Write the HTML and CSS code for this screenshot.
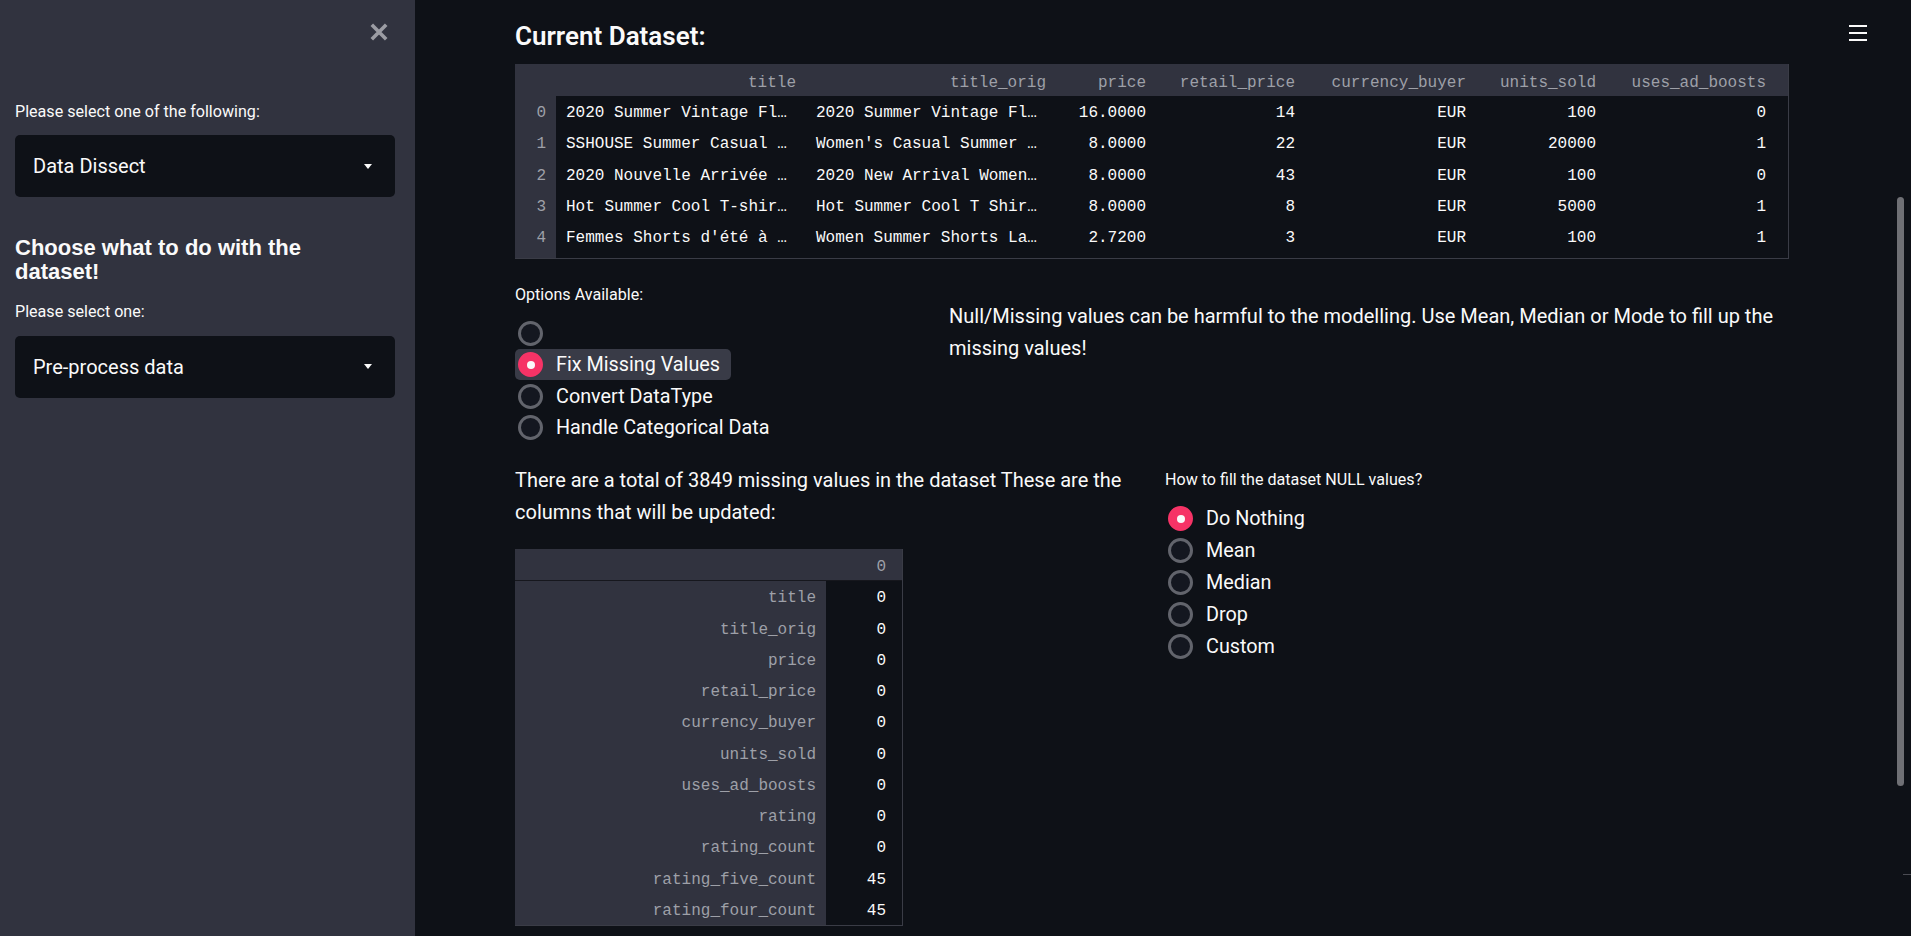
FILE: index.html
```html
<!DOCTYPE html>
<html lang="en">
<head>
<meta charset="utf-8">
<title>Data Dissect</title>
<link rel="stylesheet" href="styles.css">
</head>
<body>
<div class="app">
  <aside class="sidebar">
    <button class="close-btn" aria-label="Close sidebar">
      <svg viewBox="0 0 18 18" width="18" height="18"><path d="M1.8 1.8 L16.2 16.2 M16.2 1.8 L1.8 16.2" stroke="currentColor" stroke-width="3.6" fill="none"/></svg>
    </button>
    <div class="sb-content">
      <div class="wlabel sb-label1">Please select one of the following:</div>
      <div class="select"><span>Data Dissect</span><i class="caret"></i></div>
      <h3 class="sb-heading">Choose what to do with the<br>dataset!</h3>
      <div class="wlabel sb-label2">Please select one:</div>
      <div class="select"><span>Pre-process data</span><i class="caret"></i></div>
    </div>
  </aside>

  <main class="main">
    <div class="hamburger" aria-label="menu"><span></span><span></span><span></span></div>
    <div class="content">
      <h3 class="title">Current Dataset:</h3>

      <div class="df-wrap df-main">
        <table class="df">
          <colgroup>
            <col class="w-idx"><col class="w-title"><col class="w-title"><col class="w-price"><col class="w-retail"><col class="w-cur"><col class="w-units"><col class="w-ads"><col class="w-fill1">
          </colgroup>
          <thead>
            <tr><th></th><th>title</th><th>title_orig</th><th>price</th><th>retail_price</th><th>currency_buyer</th><th>units_sold</th><th>uses_ad_boosts</th><th></th></tr>
          </thead>
          <tbody>
            <tr><th>0</th><td class="l">2020 Summer Vintage Fl…</td><td class="l">2020 Summer Vintage Fl…</td><td>16.0000</td><td>14</td><td>EUR</td><td>100</td><td>0</td><td></td></tr>
            <tr><th>1</th><td class="l">SSHOUSE Summer Casual …</td><td class="l">Women's Casual Summer …</td><td>8.0000</td><td>22</td><td>EUR</td><td>20000</td><td>1</td><td></td></tr>
            <tr><th>2</th><td class="l">2020 Nouvelle Arrivée …</td><td class="l">2020 New Arrival Women…</td><td>8.0000</td><td>43</td><td>EUR</td><td>100</td><td>0</td><td></td></tr>
            <tr><th>3</th><td class="l">Hot Summer Cool T-shir…</td><td class="l">Hot Summer Cool T Shir…</td><td>8.0000</td><td>8</td><td>EUR</td><td>5000</td><td>1</td><td></td></tr>
            <tr><th>4</th><td class="l">Femmes Shorts d'été à …</td><td class="l">Women Summer Shorts La…</td><td>2.7200</td><td>3</td><td>EUR</td><td>100</td><td>1</td><td></td></tr>
            <tr class="spacer"><th></th><td></td><td></td><td></td><td></td><td></td><td></td><td></td><td></td></tr>
          </tbody>
        </table>
      </div>

      <div class="row row-options">
        <div class="col">
          <div class="wlabel opt-label">Options Available:</div>
          <div class="radios radios-left">
            <div class="radio"><span class="circle"></span><span class="rtext"></span></div>
            <div class="radio checked focused"><span class="circle"></span><span class="rtext">Fix Missing Values</span></div>
            <div class="radio"><span class="circle"></span><span class="rtext">Convert DataType</span></div>
            <div class="radio"><span class="circle"></span><span class="rtext">Handle Categorical Data</span></div>
          </div>
        </div>
        <div class="col col-note">
          <p class="text">Null/Missing values can be harmful to the modelling. Use Mean, Median or Mode to fill up the missing values!</p>
        </div>
      </div>

      <div class="row row-missing">
        <div class="col">
          <p class="text">There are a total of 3849 missing values in the dataset These are the columns that will be updated:</p>
          <div class="df-wrap df-small">
            <table class="df">
              <colgroup><col class="w-name"><col class="w-val"><col class="w-fill2"></colgroup>
              <thead><tr><th></th><th>0</th><th></th></tr></thead>
              <tbody>
                <tr><th>title</th><td>0</td><td></td></tr>
                <tr><th>title_orig</th><td>0</td><td></td></tr>
                <tr><th>price</th><td>0</td><td></td></tr>
                <tr><th>retail_price</th><td>0</td><td></td></tr>
                <tr><th>currency_buyer</th><td>0</td><td></td></tr>
                <tr><th>units_sold</th><td>0</td><td></td></tr>
                <tr><th>uses_ad_boosts</th><td>0</td><td></td></tr>
                <tr><th>rating</th><td>0</td><td></td></tr>
                <tr><th>rating_count</th><td>0</td><td></td></tr>
                <tr><th>rating_five_count</th><td>45</td><td></td></tr>
                <tr><th>rating_four_count</th><td>45</td><td></td></tr>
              </tbody>
            </table>
          </div>
        </div>
        <div class="col col-fill">
          <div class="wlabel fill-label">How to fill the dataset NULL values?</div>
          <div class="radios radios-right">
            <div class="radio checked"><span class="circle"></span><span class="rtext">Do Nothing</span></div>
            <div class="radio"><span class="circle"></span><span class="rtext">Mean</span></div>
            <div class="radio"><span class="circle"></span><span class="rtext">Median</span></div>
            <div class="radio"><span class="circle"></span><span class="rtext">Drop</span></div>
            <div class="radio"><span class="circle"></span><span class="rtext">Custom</span></div>
          </div>
        </div>
      </div>
    </div>
    <div class="scrollbar"></div>
    <div class="corner-line"></div>
  </main>
</div>
</body>
</html>
```

FILE: styles.css
```css
* { box-sizing: border-box; }

html, body {
  margin: 0;
  padding: 0;
}

body {
  background: #0e1117;
  color: #fafafa;
  font-family: Roboto, "Liberation Sans", sans-serif;
  overflow: hidden;
}

.app {
  display: flex;
  height: 936px;
}

/* ---------- Sidebar ---------- */
.sidebar {
  position: relative;
  flex: none;
  width: 415px;
  height: 100%;
  background: #31333f;
  padding: 101px 20px 0 15px;
}

.close-btn {
  position: absolute;
  left: 370px;
  top: 23px;
  width: 18px;
  height: 18px;
  padding: 0;
  border: 0;
  background: none;
  color: #9b9ca3;
  display: flex;
}

.sb-content {
  display: flex;
  flex-direction: column;
}

.wlabel {
  font-size: 16.1px;
  line-height: 22px;
  color: #fafafa;
}

.sb-label1 { margin-bottom: 12px; }

.select {
  height: 62px;
  background: #0e1117;
  border-radius: 5px;
  display: flex;
  align-items: center;
  justify-content: space-between;
  padding: 0 23px 0 18px;
  font-size: 20px;
}

.caret {
  width: 0;
  height: 0;
  border-left: 4.5px solid transparent;
  border-right: 4.5px solid transparent;
  border-top: 5px solid #fafafa;
}

.sb-heading {
  margin: 38.7px 0 0 0;
  font-family: "Liberation Sans", Roboto, sans-serif;
  font-size: 22px;
  font-weight: 700;
  line-height: 24.6px;
}

.sb-label2 { margin: 16.6px 0 12.5px 0; }

/* ---------- Main ---------- */
.main {
  position: relative;
  flex: 1;
  height: 100%;
}

.hamburger {
  position: absolute;
  top: 25px;
  right: 44px;
  width: 18px;
  display: flex;
  flex-direction: column;
  gap: 5px;
}

.hamburger span {
  display: block;
  height: 2px;
  background: #fafafa;
}

.content {
  width: 1274px;
  margin-left: 100px;
}

.title {
  margin: 0 0 13px 0;
  padding-top: 22px;
  font-size: 26px;
  line-height: 29px;
  font-weight: 600;
}

/* ---------- Dataframes ---------- */
.df-wrap {
  border-right: 1px solid #3a3c46;
  border-bottom: 1px solid #3a3c46;
}

.df {
  width: 100%;
  border-collapse: separate;
  border-spacing: 0;
  table-layout: fixed;
  font-family: "Liberation Mono", "DejaVu Sans Mono", monospace;
  font-size: 16px;
}

.df th, .df td {
  padding: 3px 10px 0 10px;
  text-align: right;
  white-space: pre;
  overflow: hidden;
}

.df thead th {
  height: 32px;
  padding-top: 5px;
  background: #31333f;
  color: #9ea0a8;
  font-weight: 400;
}

.df tbody th {
  background: #31333f;
  color: #9ea0a8;
  font-weight: 400;
}

.df tbody td {
  height: 31.25px;
  color: #fafafa;
  background: #0e1117;
}

.df td.l { text-align: left; }

.df tr.spacer th, .df tr.spacer td { height: 6px; padding: 0; }

.w-idx { width: 41px; }
.w-title { width: 250px; }
.w-price { width: 100px; }
.w-retail { width: 149px; }
.w-cur { width: 171px; }
.w-units { width: 130px; }
.w-ads { width: 170px; }
.w-fill1 { width: 12px; }

.df-small { width: 388px; margin-top: 21px; }
.df-small thead th { height: 32px; border-bottom: 1px solid #16171d; }
.df-small tbody th, .df-small tbody td { padding-top: 4px; }
.w-name { width: 311px; }
.w-val { width: 70px; }
.w-fill2 { width: 6px; }

/* ---------- Rows / columns ---------- */
.row {
  display: grid;
}

.row-options {
  grid-template-columns: 414px 1fr;
  column-gap: 20px;
  margin-top: 25px;
}

.row-missing {
  grid-template-columns: 624px 1fr;
  column-gap: 26px;
  margin-top: 20.5px;
}

.text {
  margin: 0;
  font-size: 20px;
  line-height: 32px;
}

.col-note { padding-top: 15.6px; }

.opt-label { margin-bottom: 11px; }

.col-fill { padding-top: 4.8px; }
.fill-label { margin-bottom: 12px; }

/* ---------- Radios ---------- */
.radios {
  display: flex;
  flex-direction: column;
  align-items: flex-start;
}

.radio {
  display: flex;
  align-items: center;
  height: 32px;
  padding: 0 11px 0 3px;
  border-radius: 5px;
  font-size: 19.8px;
}

.radios-left .radio { height: 31.5px; }

.radio.focused { background: #393b47; }

.circle {
  flex: none;
  width: 25px;
  height: 25px;
  border-radius: 50%;
  border: 3px solid #62646c;
  background: #141720;
  display: flex;
  align-items: center;
  justify-content: center;
}

.radio.checked .circle {
  border-color: #f63366;
  background: #f63366;
}

.radio.checked .circle::after {
  content: "";
  width: 8px;
  height: 8px;
  border-radius: 50%;
  background: #fafafa;
}

.rtext { margin-left: 13px; }

/* ---------- Overlay scrollbar ---------- */
.scrollbar {
  position: absolute;
  right: 7px;
  top: 197px;
  width: 7px;
  height: 589px;
  border-radius: 4px;
  background: #6f7075;
}

.corner-line {
  position: absolute;
  right: 0;
  top: 874px;
  width: 8px;
  height: 1px;
  background: #4a4b52;
}
```
